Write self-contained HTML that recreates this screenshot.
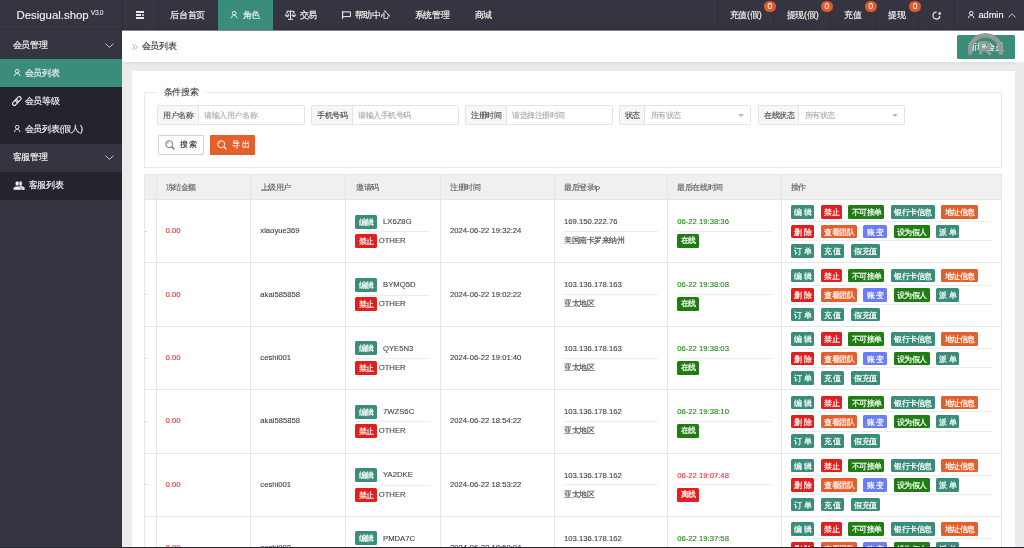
<!DOCTYPE html><html><head><meta charset="utf-8"><style>
*{box-sizing:border-box;margin:0;padding:0}
html,body{width:1024px;height:548px;overflow:hidden;background:#ebebeb;font-family:"Liberation Sans",sans-serif;color:#333}
.a{position:absolute;white-space:nowrap;-webkit-text-stroke:0.12px currentColor}
.nav{height:30px;line-height:30px;font-size:9px;color:#f2f2f2;top:0;-webkit-text-stroke:0.17px #f2f2f2;letter-spacing:-0.2px}
.si{left:0;width:122px;height:28px;line-height:28px;font-size:9px;color:#eeeeee;-webkit-text-stroke:0.17px #eee;letter-spacing:-0.2px}
.t{font-size:7.7px;color:#444;line-height:10px}
.c{font-size:8px;letter-spacing:-0.45px;line-height:10px;color:#444}
.b{height:13.5px;line-height:15.2px;-webkit-text-stroke:0.2px #fff;font-size:8px;letter-spacing:-0.5px;color:#fff;border-radius:1.5px;text-align:center;text-indent:0.5px}
.hl{height:1px;background:#ececec}
.vl{width:1px;background:#e6e6e6}
svg{position:absolute;overflow:visible}
</style></head><body><div style="position:absolute;left:0;top:0;width:1024px;height:548px;will-change:transform">
<div class="a" style="left:0;top:0;width:1024px;height:31px;background:#353441"></div>
<div class="a" style="left:0;top:29px;width:1024px;height:1px;background:#2e2d39"></div>
<div class="a" style="left:122px;top:30px;width:902px;height:1px;background:#8c8b94"></div>
<div class="a" style="left:16.5px;top:7.5px;font-size:11.4px;line-height:14px;color:#f2f2f2">Desigual.shop</div>
<div class="a" style="left:90.8px;top:8.6px;font-size:6.6px;line-height:7px;color:#e0e0e0;letter-spacing:-0.3px">V3.0</div>
<div class="a" style="left:122px;top:0;width:1px;height:30px;background:#2d2c37"></div>
<div class="a" style="left:157.5px;top:0;width:1px;height:30px;background:#2d2c37"></div>
<div class="a" style="left:716.5px;top:0;width:1px;height:30px;background:#2d2c37"></div>
<div class="a" style="left:773px;top:0;width:1px;height:30px;background:#2d2c37"></div>
<div class="a" style="left:830px;top:0;width:1px;height:30px;background:#2d2c37"></div>
<div class="a" style="left:875px;top:0;width:1px;height:30px;background:#2d2c37"></div>
<div class="a" style="left:918px;top:0;width:1px;height:30px;background:#2d2c37"></div>
<div class="a" style="left:953.5px;top:0;width:1px;height:30px;background:#2d2c37"></div>
<div class="a" style="left:218px;top:0;width:55px;height:30px;background:#3b8d7b"></div>
<div class="a" style="left:136px;top:11px;width:8px;height:1.6px;background:#e8e8e8"></div>
<div class="a" style="left:136px;top:14px;width:5px;height:1.6px;background:#e8e8e8"></div>
<div class="a" style="left:142.3px;top:13.6px;width:1.5px;height:2.4px;background:#e8e8e8;border-radius:1px"></div>
<div class="a" style="left:136px;top:17px;width:8px;height:1.6px;background:#e8e8e8"></div>
<svg style="left:231px;top:11px" width="6.4" height="7.4" viewBox="0 0 7 8"><circle cx="3.5" cy="2.4" r="2" fill="none" stroke="#f0f0f0" stroke-width="1.05"/><path d="M0.5 7.8 C0.8 5.6 2 4.7 3.5 4.7 C5 4.7 6.2 5.6 6.5 7.8" fill="none" stroke="#f0f0f0" stroke-width="1.05"/></svg>
<div class="a nav" style="left:170px">后台首页</div>
<div class="a nav" style="left:242.5px">角色</div>
<div class="a nav" style="left:299.5px">交易</div>
<div class="a nav" style="left:354.5px">帮助中心</div>
<div class="a nav" style="left:414.5px">系统管理</div>
<div class="a nav" style="left:474.5px">商城</div>
<div class="a nav" style="left:729.5px">充值(假)</div>
<div class="a nav" style="left:786.5px">提现(假)</div>
<div class="a nav" style="left:844px">充值</div>
<div class="a nav" style="left:888px">提现</div>
<svg style="left:285px;top:10px" width="11" height="10" viewBox="0 0 11 10"><path d="M1.5 1.3 H9.5 M5.5 0.5 V9 M3 9.3 H8" stroke="#eee" stroke-width="1" fill="none"/><path d="M0.3 5.6 L2.2 2 L4.1 5.6 Z M6.9 5.6 L8.8 2 L10.7 5.6 Z" stroke="#eee" stroke-width="0.7" fill="none"/><path d="M0.2 5.6 H4.2 C4 7.3 0.4 7.3 0.2 5.6 Z M6.8 5.6 H10.8 C10.6 7.3 7 7.3 6.8 5.6 Z" fill="#eee"/></svg>
<svg style="left:342px;top:11px" width="9" height="8" viewBox="0 0 9 8"><path d="M0.6 0 V8" stroke="#eee" stroke-width="1.1"/><path d="M0.6 0.9 H8.4 V5.6 H0.6" stroke="#eee" stroke-width="1" fill="none"/></svg>
<div class="a" style="left:763.8px;top:0.8px;width:12px;height:11.5px;border-radius:6px;background:#e4582a;color:#fff;font-size:8.4px;line-height:11.5px;text-align:center">0</div>
<div class="a" style="left:820.9px;top:0.8px;width:12px;height:11.5px;border-radius:6px;background:#e4582a;color:#fff;font-size:8.4px;line-height:11.5px;text-align:center">0</div>
<div class="a" style="left:864.9px;top:0.8px;width:12px;height:11.5px;border-radius:6px;background:#e4582a;color:#fff;font-size:8.4px;line-height:11.5px;text-align:center">0</div>
<div class="a" style="left:909px;top:0.8px;width:12px;height:11.5px;border-radius:6px;background:#e4582a;color:#fff;font-size:8.4px;line-height:11.5px;text-align:center">0</div>
<svg style="left:931.5px;top:10.5px" width="9" height="9" viewBox="0 0 9 9"><path d="M7.95 5.11 A3.5 3.5 0 1 1 4.81 1.01" stroke="#e6e6e6" stroke-width="1.2" fill="none"/><rect x="6.5" y="1.4" width="2.3" height="2.3" fill="#f4f4f4"/></svg>
<svg style="left:968px;top:11px" width="6.4" height="7.4" viewBox="0 0 7 8"><circle cx="3.5" cy="2.4" r="2" fill="none" stroke="#eee" stroke-width="1.05"/><path d="M0.5 7.8 C0.8 5.6 2 4.7 3.5 4.7 C5 4.7 6.2 5.6 6.5 7.8" fill="none" stroke="#eee" stroke-width="1.05"/></svg>
<div class="a nav" style="left:978.5px;font-size:9.2px;letter-spacing:0">admin</div>
<svg style="left:1008px;top:13px" width="8" height="5" viewBox="0 0 8 5"><path d="M0.4 4.4 L4 0.8 L7.6 4.4" stroke="#ddd" stroke-width="0.9" fill="none"/></svg>
<div class="a" style="left:0;top:31px;width:122px;height:517px;background:#353441"></div>
<div class="a" style="left:0;top:59px;width:122px;height:28px;background:#3b8d7b"></div>
<div class="a" style="left:0;top:87px;width:122px;height:56.5px;background:#25242e"></div>
<div class="a" style="left:0;top:171.5px;width:122px;height:28px;background:#25242e"></div>
<div class="a si" style="top:31px;left:12.5px;width:auto">会员管理</div>
<div class="a si" style="top:59px;left:24.5px;width:auto">会员列表</div>
<div class="a si" style="top:87px;left:24.5px;width:auto">会员等级</div>
<div class="a si" style="top:115px;left:24.5px;width:auto">会员列表(假人)</div>
<div class="a si" style="top:143px;left:12.5px;width:auto">客服管理</div>
<div class="a si" style="top:171px;left:28.5px;width:auto">客服列表</div>
<svg style="left:104.5px;top:43px" width="9" height="5" viewBox="0 0 9 5"><path d="M0.4 0.5 L4.5 4.4 L8.6 0.5" stroke="#cfcfd4" stroke-width="0.9" fill="none"/></svg>
<svg style="left:104.5px;top:155px" width="9" height="5" viewBox="0 0 9 5"><path d="M0.4 0.5 L4.5 4.4 L8.6 0.5" stroke="#cfcfd4" stroke-width="0.9" fill="none"/></svg>
<svg style="left:13.5px;top:69px" width="6.4" height="7.4" viewBox="0 0 7 8"><circle cx="3.5" cy="2.4" r="2" fill="none" stroke="#f0f0f0" stroke-width="1.05"/><path d="M0.5 7.8 C0.8 5.6 2 4.7 3.5 4.7 C5 4.7 6.2 5.6 6.5 7.8" fill="none" stroke="#f0f0f0" stroke-width="1.05"/></svg>
<svg style="left:13.5px;top:125px" width="6.4" height="7.4" viewBox="0 0 7 8"><circle cx="3.5" cy="2.4" r="2" fill="none" stroke="#e8e8e8" stroke-width="1.05"/><path d="M0.5 7.8 C0.8 5.6 2 4.7 3.5 4.7 C5 4.7 6.2 5.6 6.5 7.8" fill="none" stroke="#e8e8e8" stroke-width="1.05"/></svg>
<svg style="left:12px;top:95.5px" width="10" height="10" viewBox="0 0 10 10"><rect x="4.6" y="0.2" width="3.6" height="6.4" rx="1.8" transform="rotate(45 6.4 3.4)" stroke="#eee" stroke-width="1.15" fill="none"/><rect x="1.5" y="3.4" width="3.6" height="6.4" rx="1.8" transform="rotate(45 3.3 6.6)" stroke="#eee" stroke-width="1.15" fill="none"/></svg>
<svg style="left:13px;top:181px" width="12" height="9" viewBox="0 0 12 9"><ellipse cx="7.6" cy="2.6" rx="1.6" ry="2.4" fill="#ddd"/><path d="M5.5 5.4 C7 4.8 9.8 5 11.6 6.6 L11.6 9 H6 Z" fill="#ddd"/><ellipse cx="4.2" cy="2.4" rx="1.9" ry="2.5" fill="#f4f4f4" stroke="#31303c" stroke-width="0.5"/><path d="M0 9 C0.2 6.2 2 5.2 4.2 5.2 C6.4 5.2 8.2 6.2 8.4 9 Z" fill="#f4f4f4" stroke="#31303c" stroke-width="0.5"/></svg>
<div class="a" style="left:122px;top:31px;width:902px;height:30.5px;background:#fff;box-shadow:0 1px 3px rgba(0,0,0,0.08)"></div>
<svg style="left:132px;top:44px" width="6" height="6" viewBox="0 0 6 6"><path d="M0.4 0.3 L2.7 3 L0.4 5.7 M3 0.3 L5.3 3 L3 5.7" stroke="#a0a0a0" stroke-width="0.8" fill="none"/></svg>
<div class="a" style="left:141.5px;top:40.7px;font-size:9px;line-height:10px;color:#333;letter-spacing:-0.2px">会员列表</div>
<div class="a" style="left:957px;top:35px;width:57.5px;height:24px;background:#3b8d7b;border-radius:1.5px;color:#fff;font-size:9px;letter-spacing:-0.2px;line-height:24px;text-align:center">新增会员</div>
<svg style="left:955px;top:30px" width="60" height="30" viewBox="0 0 60 30"><path d="M15.62 24.6 A15.4 15.4 0 1 1 45.38 24.6" stroke="#979a98" stroke-width="4.4" fill="none"/><path d="M25.6 24.6 V12.6 H30.6 C35.6 12.6 35.6 19.8 30.6 19.8 H25.6 M30.5 19.8 L36 24.6" stroke="#979a98" stroke-width="3.1" fill="none"/></svg>
<div class="a" style="left:132px;top:71.2px;width:882.5px;height:480px;background:#fff"></div>
<div class="a" style="left:144px;top:92px;width:858px;height:76px;border:1px solid #e8e8e8"></div>
<div class="a" style="left:157px;top:87px;width:48px;height:10px;background:#fff"></div>
<div class="a" style="left:163.5px;top:86.8px;font-size:9px;line-height:10px;color:#444;letter-spacing:-0.2px">条件搜索</div>
<div class="a" style="left:157.20000000000002px;top:105px;width:147.6px;height:20.3px;border:1px solid #e4e4e4;border-radius:1.5px;background:#fff"></div><div class="a" style="left:157.20000000000002px;top:105px;width:41.6px;height:20.3px;border:1px solid #e4e4e4;border-radius:1.5px 0 0 1.5px;background:#f7f7f7"></div><div class="a c" style="left:163.3px;top:110.5px;color:#444">用户名称</div><div class="a c" style="left:204.3px;top:110.5px;color:#aaa">请输入用户名称</div>
<div class="a" style="left:311.0px;top:105px;width:147.6px;height:20.3px;border:1px solid #e4e4e4;border-radius:1.5px;background:#fff"></div><div class="a" style="left:311.0px;top:105px;width:41.6px;height:20.3px;border:1px solid #e4e4e4;border-radius:1.5px 0 0 1.5px;background:#f7f7f7"></div><div class="a c" style="left:317.1px;top:110.5px;color:#444">手机号码</div><div class="a c" style="left:358.1px;top:110.5px;color:#aaa">请输入手机号码</div>
<div class="a" style="left:465.0px;top:105px;width:147.6px;height:20.3px;border:1px solid #e4e4e4;border-radius:1.5px;background:#fff"></div><div class="a" style="left:465.0px;top:105px;width:41.6px;height:20.3px;border:1px solid #e4e4e4;border-radius:1.5px 0 0 1.5px;background:#f7f7f7"></div><div class="a c" style="left:471.1px;top:110.5px;color:#444">注册时间</div><div class="a c" style="left:512.1px;top:110.5px;color:#aaa">请选择注册时间</div>
<div class="a" style="left:618.6999999999999px;top:105px;width:132.29999999999998px;height:20.3px;border:1px solid #e4e4e4;border-radius:1.5px;background:#fff"></div><div class="a" style="left:618.6999999999999px;top:105px;width:26.6px;height:20.3px;border:1px solid #e4e4e4;border-radius:1.5px 0 0 1.5px;background:#f7f7f7"></div><div class="a c" style="left:624.8px;top:110.5px;color:#444">状态</div><div class="a c" style="left:650.8px;top:110.5px;color:#aaa">所有状态</div><div class="a" style="left:738.0px;top:114px;width:0;height:0;border-left:3.6px solid transparent;border-right:3.6px solid transparent;border-top:3.5px solid #b8b8b8"></div>
<div class="a" style="left:758.1px;top:105px;width:147.1px;height:20.3px;border:1px solid #e4e4e4;border-radius:1.5px;background:#fff"></div><div class="a" style="left:758.1px;top:105px;width:41.1px;height:20.3px;border:1px solid #e4e4e4;border-radius:1.5px 0 0 1.5px;background:#f7f7f7"></div><div class="a c" style="left:764.2px;top:110.5px;color:#444">在线状态</div><div class="a c" style="left:804.7px;top:110.5px;color:#aaa">所有状态</div><div class="a" style="left:892.2px;top:114px;width:0;height:0;border-left:3.6px solid transparent;border-right:3.6px solid transparent;border-top:3.5px solid #b8b8b8"></div>
<div class="a" style="left:157.8px;top:135px;width:46px;height:19.5px;border:1px solid #d2d2d2;background:#fff;border-radius:1px"></div>
<svg style="left:165px;top:139.5px" width="10" height="10" viewBox="0 0 10 10"><circle cx="4.2" cy="4.2" r="3.5" stroke="#666" stroke-width="0.9" fill="none"/><path d="M6.8 6.8 L9.4 9.4" stroke="#666" stroke-width="1.3"/><path d="M2.2 3.8 A2 2 0 0 1 3.8 2.2" stroke="#666" stroke-width="0.6" fill="none"/></svg>
<div class="a c" style="left:179.5px;top:140px;color:#333;letter-spacing:1.5px">搜索</div>
<div class="a" style="left:210.3px;top:135px;width:44.6px;height:19.5px;background:#e3602c;border-radius:1px"></div>
<svg style="left:217px;top:139.5px" width="10" height="10" viewBox="0 0 10 10"><circle cx="4.2" cy="4.2" r="3.5" stroke="#fff" stroke-width="0.9" fill="none"/><path d="M6.8 6.8 L9.4 9.4" stroke="#fff" stroke-width="1.3"/><path d="M2.2 3.8 A2 2 0 0 1 3.8 2.2" stroke="#fff" stroke-width="0.6" fill="none"/></svg>
<div class="a c" style="left:232px;top:140px;color:#fff;letter-spacing:1.5px">导出</div>
<div class="a" style="left:144.5px;top:174.4px;width:857.0px;height:25.099999999999994px;background:#f0f0f0"></div>
<div class="a" style="left:144.5px;top:199.0px;width:857.0px;height:1px;background:#e6e6e6"></div>
<div class="a" style="left:144.5px;top:262.38px;width:857.0px;height:1px;background:#e6e6e6"></div>
<div class="a" style="left:144.5px;top:325.76px;width:857.0px;height:1px;background:#e6e6e6"></div>
<div class="a" style="left:144.5px;top:389.14px;width:857.0px;height:1px;background:#e6e6e6"></div>
<div class="a" style="left:144.5px;top:452.52px;width:857.0px;height:1px;background:#e6e6e6"></div>
<div class="a" style="left:144.5px;top:515.9000000000001px;width:857.0px;height:1px;background:#e6e6e6"></div>
<div class="a" style="left:144.5px;top:579.28px;width:857.0px;height:1px;background:#e6e6e6"></div>
<div class="a" style="left:144.5px;top:174.4px;width:857.0px;height:1px;background:#e6e6e6"></div>
<div class="a vl" style="left:144.0px;top:174.4px;height:373.6px"></div>
<div class="a vl" style="left:155.5px;top:174.4px;height:373.6px"></div>
<div class="a vl" style="left:250.2px;top:174.4px;height:373.6px"></div>
<div class="a vl" style="left:345.0px;top:174.4px;height:373.6px"></div>
<div class="a vl" style="left:440.0px;top:174.4px;height:373.6px"></div>
<div class="a vl" style="left:554.1px;top:174.4px;height:373.6px"></div>
<div class="a vl" style="left:666.8px;top:174.4px;height:373.6px"></div>
<div class="a vl" style="left:781.2px;top:174.4px;height:373.6px"></div>
<div class="a vl" style="left:1001.0px;top:174.4px;height:373.6px"></div>
<div class="a c" style="left:165.7px;top:182.5px;color:#5c5c5c">冻结金额</div>
<div class="a c" style="left:260.5px;top:182.5px;color:#5c5c5c">上级用户</div>
<div class="a c" style="left:356px;top:182.5px;color:#5c5c5c">邀请码</div>
<div class="a c" style="left:450.2px;top:182.5px;color:#5c5c5c">注册时间</div>
<div class="a c" style="left:564px;top:182.5px;color:#5c5c5c">最后登录ip</div>
<div class="a c" style="left:677.4px;top:182.5px;color:#5c5c5c">最后在线时间</div>
<div class="a c" style="left:790.8px;top:182.5px;color:#5c5c5c">操作</div>
<div class="a" style="left:145px;top:230.89px;width:1.5px;height:1px;background:#d4d4d4"></div>
<div class="a t" style="left:165.5px;top:226.19px;color:#e8333a">0.00</div>
<div class="a t" style="left:260.3px;top:226.19px">xiaoyue369</div>
<div class="a b" style="left:355px;top:214.59px;width:21.5px;height:14px;background:#3b8d7b">编辑</div>
<div class="a t" style="left:383px;top:216.79px">LX6Z8G</div>
<div class="a hl" style="left:355px;top:231.19px;width:75px"></div>
<div class="a b" style="left:355px;top:233.99px;width:21.5px;height:14px;background:#e21f1c">禁止</div>
<div class="a t" style="left:378.7px;top:235.99px">OTHER</div>
<div class="a t" style="left:450px;top:226.19px">2024-06-22 19:32:24</div>
<div class="a t" style="left:564px;top:216.99px">169.150.222.76</div>
<div class="a hl" style="left:564px;top:230.79px;width:94px"></div>
<div class="a c" style="left:564px;top:235.99px">美国南卡罗来纳州</div>
<div class="a t" style="left:677.2px;top:216.99px;color:#22881a">06-22 19:38:36</div>
<div class="a hl" style="left:677.7px;top:230.79px;width:94px"></div>
<div class="a b" style="left:677.3px;top:233.99px;width:21.5px;height:14px;line-height:14px;background:#1f7d14">在线</div>
<div class="a b" style="left:791px;top:205.44px;width:23px;background:#3b8d7b">编 辑</div>
<div class="a b" style="left:820.9px;top:205.44px;width:21px;background:#e21f1c">禁止</div>
<div class="a b" style="left:848.4px;top:205.44px;width:36px;background:#1f7d14">不可接单</div>
<div class="a b" style="left:891.3px;top:205.44px;width:43.4px;background:#3b8d7b">银行卡信息</div>
<div class="a b" style="left:941.2px;top:205.44px;width:36.5px;background:#e3602c">地址信息</div>
<div class="a b" style="left:791px;top:224.84px;width:23px;background:#e21f1c">删 除</div>
<div class="a b" style="left:820.9px;top:224.84px;width:36px;background:#e3602c">查看团队</div>
<div class="a b" style="left:863.4px;top:224.84px;width:23.6px;background:#6b7df6">账 变</div>
<div class="a b" style="left:893.5px;top:224.84px;width:36px;background:#1f7d14">设为假人</div>
<div class="a b" style="left:936px;top:224.84px;width:23px;background:#3b8d7b">派 单</div>
<div class="a b" style="left:791px;top:244.24px;width:23px;background:#3b8d7b">订 单</div>
<div class="a b" style="left:820.9px;top:244.24px;width:23px;background:#3b8d7b">充 值</div>
<div class="a b" style="left:851px;top:244.24px;width:28.5px;background:#3b8d7b">假充值</div>
<div class="a hl" style="left:791px;top:221.19px;width:201px"></div>
<div class="a hl" style="left:791px;top:240.49px;width:201px"></div>
<div class="a" style="left:145px;top:294.27px;width:1.5px;height:1px;background:#d4d4d4"></div>
<div class="a t" style="left:165.5px;top:289.57px;color:#e8333a">0.00</div>
<div class="a t" style="left:260.3px;top:289.57px">akai585858</div>
<div class="a b" style="left:355px;top:277.96999999999997px;width:21.5px;height:14px;background:#3b8d7b">编辑</div>
<div class="a t" style="left:383px;top:280.17px">BYMQ5D</div>
<div class="a hl" style="left:355px;top:294.57px;width:75px"></div>
<div class="a b" style="left:355px;top:297.37px;width:21.5px;height:14px;background:#e21f1c">禁止</div>
<div class="a t" style="left:378.7px;top:299.37px">OTHER</div>
<div class="a t" style="left:450px;top:289.57px">2024-06-22 19:02:22</div>
<div class="a t" style="left:564px;top:280.37px">103.136.178.163</div>
<div class="a hl" style="left:564px;top:294.17px;width:94px"></div>
<div class="a c" style="left:564px;top:299.37px">亚太地区</div>
<div class="a t" style="left:677.2px;top:280.37px;color:#22881a">06-22 19:38:08</div>
<div class="a hl" style="left:677.7px;top:294.17px;width:94px"></div>
<div class="a b" style="left:677.3px;top:297.37px;width:21.5px;height:14px;line-height:14px;background:#1f7d14">在线</div>
<div class="a b" style="left:791px;top:268.82px;width:23px;background:#3b8d7b">编 辑</div>
<div class="a b" style="left:820.9px;top:268.82px;width:21px;background:#e21f1c">禁止</div>
<div class="a b" style="left:848.4px;top:268.82px;width:36px;background:#1f7d14">不可接单</div>
<div class="a b" style="left:891.3px;top:268.82px;width:43.4px;background:#3b8d7b">银行卡信息</div>
<div class="a b" style="left:941.2px;top:268.82px;width:36.5px;background:#e3602c">地址信息</div>
<div class="a b" style="left:791px;top:288.21999999999997px;width:23px;background:#e21f1c">删 除</div>
<div class="a b" style="left:820.9px;top:288.21999999999997px;width:36px;background:#e3602c">查看团队</div>
<div class="a b" style="left:863.4px;top:288.21999999999997px;width:23.6px;background:#6b7df6">账 变</div>
<div class="a b" style="left:893.5px;top:288.21999999999997px;width:36px;background:#1f7d14">设为假人</div>
<div class="a b" style="left:936px;top:288.21999999999997px;width:23px;background:#3b8d7b">派 单</div>
<div class="a b" style="left:791px;top:307.62px;width:23px;background:#3b8d7b">订 单</div>
<div class="a b" style="left:820.9px;top:307.62px;width:23px;background:#3b8d7b">充 值</div>
<div class="a b" style="left:851px;top:307.62px;width:28.5px;background:#3b8d7b">假充值</div>
<div class="a hl" style="left:791px;top:284.57px;width:201px"></div>
<div class="a hl" style="left:791px;top:303.87px;width:201px"></div>
<div class="a" style="left:145px;top:357.65px;width:1.5px;height:1px;background:#d4d4d4"></div>
<div class="a t" style="left:165.5px;top:352.95px;color:#e8333a">0.00</div>
<div class="a t" style="left:260.3px;top:352.95px">ceshi001</div>
<div class="a b" style="left:355px;top:341.34999999999997px;width:21.5px;height:14px;background:#3b8d7b">编辑</div>
<div class="a t" style="left:383px;top:343.55px">QYE5N3</div>
<div class="a hl" style="left:355px;top:357.95px;width:75px"></div>
<div class="a b" style="left:355px;top:360.75px;width:21.5px;height:14px;background:#e21f1c">禁止</div>
<div class="a t" style="left:378.7px;top:362.75px">OTHER</div>
<div class="a t" style="left:450px;top:352.95px">2024-06-22 19:01:40</div>
<div class="a t" style="left:564px;top:343.75px">103.136.178.163</div>
<div class="a hl" style="left:564px;top:357.55px;width:94px"></div>
<div class="a c" style="left:564px;top:362.75px">亚太地区</div>
<div class="a t" style="left:677.2px;top:343.75px;color:#22881a">06-22 19:38:03</div>
<div class="a hl" style="left:677.7px;top:357.55px;width:94px"></div>
<div class="a b" style="left:677.3px;top:360.75px;width:21.5px;height:14px;line-height:14px;background:#1f7d14">在线</div>
<div class="a b" style="left:791px;top:332.2px;width:23px;background:#3b8d7b">编 辑</div>
<div class="a b" style="left:820.9px;top:332.2px;width:21px;background:#e21f1c">禁止</div>
<div class="a b" style="left:848.4px;top:332.2px;width:36px;background:#1f7d14">不可接单</div>
<div class="a b" style="left:891.3px;top:332.2px;width:43.4px;background:#3b8d7b">银行卡信息</div>
<div class="a b" style="left:941.2px;top:332.2px;width:36.5px;background:#e3602c">地址信息</div>
<div class="a b" style="left:791px;top:351.59999999999997px;width:23px;background:#e21f1c">删 除</div>
<div class="a b" style="left:820.9px;top:351.59999999999997px;width:36px;background:#e3602c">查看团队</div>
<div class="a b" style="left:863.4px;top:351.59999999999997px;width:23.6px;background:#6b7df6">账 变</div>
<div class="a b" style="left:893.5px;top:351.59999999999997px;width:36px;background:#1f7d14">设为假人</div>
<div class="a b" style="left:936px;top:351.59999999999997px;width:23px;background:#3b8d7b">派 单</div>
<div class="a b" style="left:791px;top:371.0px;width:23px;background:#3b8d7b">订 单</div>
<div class="a b" style="left:820.9px;top:371.0px;width:23px;background:#3b8d7b">充 值</div>
<div class="a b" style="left:851px;top:371.0px;width:28.5px;background:#3b8d7b">假充值</div>
<div class="a hl" style="left:791px;top:347.95px;width:201px"></div>
<div class="a hl" style="left:791px;top:367.25px;width:201px"></div>
<div class="a" style="left:145px;top:421.03px;width:1.5px;height:1px;background:#d4d4d4"></div>
<div class="a t" style="left:165.5px;top:416.33px;color:#e8333a">0.00</div>
<div class="a t" style="left:260.3px;top:416.33px">akai585858</div>
<div class="a b" style="left:355px;top:404.72999999999996px;width:21.5px;height:14px;background:#3b8d7b">编辑</div>
<div class="a t" style="left:383px;top:406.93px">7WZS6C</div>
<div class="a hl" style="left:355px;top:421.33px;width:75px"></div>
<div class="a b" style="left:355px;top:424.13px;width:21.5px;height:14px;background:#e21f1c">禁止</div>
<div class="a t" style="left:378.7px;top:426.13px">OTHER</div>
<div class="a t" style="left:450px;top:416.33px">2024-06-22 18:54:22</div>
<div class="a t" style="left:564px;top:407.13px">103.136.178.162</div>
<div class="a hl" style="left:564px;top:420.93px;width:94px"></div>
<div class="a c" style="left:564px;top:426.13px">亚太地区</div>
<div class="a t" style="left:677.2px;top:407.13px;color:#22881a">06-22 19:38:10</div>
<div class="a hl" style="left:677.7px;top:420.93px;width:94px"></div>
<div class="a b" style="left:677.3px;top:424.13px;width:21.5px;height:14px;line-height:14px;background:#1f7d14">在线</div>
<div class="a b" style="left:791px;top:395.58px;width:23px;background:#3b8d7b">编 辑</div>
<div class="a b" style="left:820.9px;top:395.58px;width:21px;background:#e21f1c">禁止</div>
<div class="a b" style="left:848.4px;top:395.58px;width:36px;background:#1f7d14">不可接单</div>
<div class="a b" style="left:891.3px;top:395.58px;width:43.4px;background:#3b8d7b">银行卡信息</div>
<div class="a b" style="left:941.2px;top:395.58px;width:36.5px;background:#e3602c">地址信息</div>
<div class="a b" style="left:791px;top:414.97999999999996px;width:23px;background:#e21f1c">删 除</div>
<div class="a b" style="left:820.9px;top:414.97999999999996px;width:36px;background:#e3602c">查看团队</div>
<div class="a b" style="left:863.4px;top:414.97999999999996px;width:23.6px;background:#6b7df6">账 变</div>
<div class="a b" style="left:893.5px;top:414.97999999999996px;width:36px;background:#1f7d14">设为假人</div>
<div class="a b" style="left:936px;top:414.97999999999996px;width:23px;background:#3b8d7b">派 单</div>
<div class="a b" style="left:791px;top:434.38px;width:23px;background:#3b8d7b">订 单</div>
<div class="a b" style="left:820.9px;top:434.38px;width:23px;background:#3b8d7b">充 值</div>
<div class="a b" style="left:851px;top:434.38px;width:28.5px;background:#3b8d7b">假充值</div>
<div class="a hl" style="left:791px;top:411.33px;width:201px"></div>
<div class="a hl" style="left:791px;top:430.63px;width:201px"></div>
<div class="a" style="left:145px;top:484.40999999999997px;width:1.5px;height:1px;background:#d4d4d4"></div>
<div class="a t" style="left:165.5px;top:479.71px;color:#e8333a">0.00</div>
<div class="a t" style="left:260.3px;top:479.71px">ceshi001</div>
<div class="a b" style="left:355px;top:468.10999999999996px;width:21.5px;height:14px;background:#3b8d7b">编辑</div>
<div class="a t" style="left:383px;top:470.31px">YA2DKE</div>
<div class="a hl" style="left:355px;top:484.71px;width:75px"></div>
<div class="a b" style="left:355px;top:487.51px;width:21.5px;height:14px;background:#e21f1c">禁止</div>
<div class="a t" style="left:378.7px;top:489.51px">OTHER</div>
<div class="a t" style="left:450px;top:479.71px">2024-06-22 18:53:22</div>
<div class="a t" style="left:564px;top:470.51px">103.136.178.162</div>
<div class="a hl" style="left:564px;top:484.31px;width:94px"></div>
<div class="a c" style="left:564px;top:489.51px">亚太地区</div>
<div class="a t" style="left:677.2px;top:470.51px;color:#e8333a">06-22 19:07:48</div>
<div class="a hl" style="left:677.7px;top:484.31px;width:94px"></div>
<div class="a b" style="left:677.3px;top:487.51px;width:21.5px;height:14px;line-height:14px;background:#e21f1c">离线</div>
<div class="a b" style="left:791px;top:458.96px;width:23px;background:#3b8d7b">编 辑</div>
<div class="a b" style="left:820.9px;top:458.96px;width:21px;background:#e21f1c">禁止</div>
<div class="a b" style="left:848.4px;top:458.96px;width:36px;background:#1f7d14">不可接单</div>
<div class="a b" style="left:891.3px;top:458.96px;width:43.4px;background:#3b8d7b">银行卡信息</div>
<div class="a b" style="left:941.2px;top:458.96px;width:36.5px;background:#e3602c">地址信息</div>
<div class="a b" style="left:791px;top:478.35999999999996px;width:23px;background:#e21f1c">删 除</div>
<div class="a b" style="left:820.9px;top:478.35999999999996px;width:36px;background:#e3602c">查看团队</div>
<div class="a b" style="left:863.4px;top:478.35999999999996px;width:23.6px;background:#6b7df6">账 变</div>
<div class="a b" style="left:893.5px;top:478.35999999999996px;width:36px;background:#1f7d14">设为假人</div>
<div class="a b" style="left:936px;top:478.35999999999996px;width:23px;background:#3b8d7b">派 单</div>
<div class="a b" style="left:791px;top:497.76px;width:23px;background:#3b8d7b">订 单</div>
<div class="a b" style="left:820.9px;top:497.76px;width:23px;background:#3b8d7b">充 值</div>
<div class="a b" style="left:851px;top:497.76px;width:28.5px;background:#3b8d7b">假充值</div>
<div class="a hl" style="left:791px;top:474.71px;width:201px"></div>
<div class="a hl" style="left:791px;top:494.01px;width:201px"></div>
<div class="a" style="left:145px;top:547.7900000000002px;width:1.5px;height:1px;background:#d4d4d4"></div>
<div class="a t" style="left:165.5px;top:543.0900000000001px;color:#e8333a">0.00</div>
<div class="a t" style="left:260.3px;top:543.0900000000001px">ceshi002</div>
<div class="a b" style="left:355px;top:531.4900000000001px;width:21.5px;height:14px;background:#3b8d7b">编辑</div>
<div class="a t" style="left:383px;top:533.6900000000002px">PMDA7C</div>
<div class="a hl" style="left:355px;top:548.0900000000001px;width:75px"></div>
<div class="a b" style="left:355px;top:550.8900000000001px;width:21.5px;height:14px;background:#e21f1c">禁止</div>
<div class="a t" style="left:378.7px;top:552.8900000000001px">OTHER</div>
<div class="a t" style="left:450px;top:543.0900000000001px">2024-06-22 18:50:04</div>
<div class="a t" style="left:564px;top:533.8900000000001px">103.136.178.162</div>
<div class="a hl" style="left:564px;top:547.6900000000002px;width:94px"></div>
<div class="a c" style="left:564px;top:552.8900000000001px">亚太地区</div>
<div class="a t" style="left:677.2px;top:533.8900000000001px;color:#22881a">06-22 19:37:58</div>
<div class="a hl" style="left:677.7px;top:547.6900000000002px;width:94px"></div>
<div class="a b" style="left:677.3px;top:550.8900000000001px;width:21.5px;height:14px;line-height:14px;background:#1f7d14">在线</div>
<div class="a b" style="left:791px;top:522.3400000000001px;width:23px;background:#3b8d7b">编 辑</div>
<div class="a b" style="left:820.9px;top:522.3400000000001px;width:21px;background:#e21f1c">禁止</div>
<div class="a b" style="left:848.4px;top:522.3400000000001px;width:36px;background:#1f7d14">不可接单</div>
<div class="a b" style="left:891.3px;top:522.3400000000001px;width:43.4px;background:#3b8d7b">银行卡信息</div>
<div class="a b" style="left:941.2px;top:522.3400000000001px;width:36.5px;background:#e3602c">地址信息</div>
<div class="a b" style="left:791px;top:541.7400000000001px;width:23px;background:#e21f1c">删 除</div>
<div class="a b" style="left:820.9px;top:541.7400000000001px;width:36px;background:#e3602c">查看团队</div>
<div class="a b" style="left:863.4px;top:541.7400000000001px;width:23.6px;background:#6b7df6">账 变</div>
<div class="a b" style="left:893.5px;top:541.7400000000001px;width:36px;background:#1f7d14">设为假人</div>
<div class="a b" style="left:936px;top:541.7400000000001px;width:23px;background:#3b8d7b">派 单</div>
<div class="a b" style="left:791px;top:561.1400000000001px;width:23px;background:#3b8d7b">订 单</div>
<div class="a b" style="left:820.9px;top:561.1400000000001px;width:23px;background:#3b8d7b">充 值</div>
<div class="a b" style="left:851px;top:561.1400000000001px;width:28.5px;background:#3b8d7b">假充值</div>
<div class="a hl" style="left:791px;top:538.0900000000001px;width:201px"></div>
<div class="a hl" style="left:791px;top:557.3900000000001px;width:201px"></div>
<div class="a" style="left:1014.5px;top:61.5px;width:9.5px;height:487px;background:#ebebeb"></div>
<div class="a" style="left:0;top:547px;width:1024px;height:1px;background:#26252b"></div>
</div></body></html>
